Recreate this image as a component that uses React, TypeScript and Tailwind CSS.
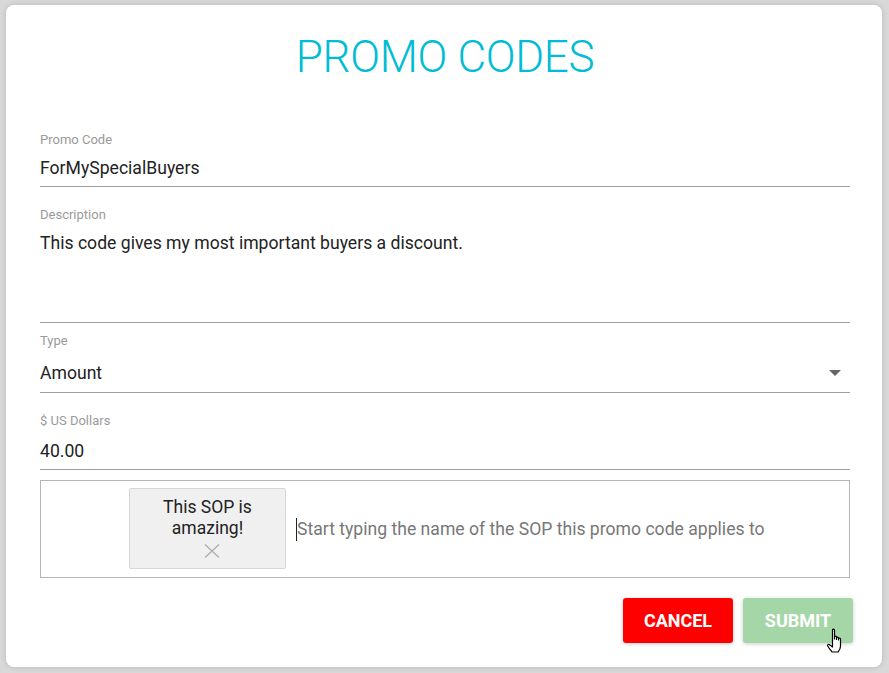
import React from "react";

export default function App() {
  return (
    <div
      className="w-[889px] h-[673px] bg-[#d9d9d9] pt-[5px] pl-[6px]"
      style={{ fontFamily: "Roboto, 'Liberation Sans', sans-serif" }}
    >
      <div className="relative w-[876px] h-[662px] bg-white rounded-[8px] shadow-[0_0_6px_rgba(0,0,0,0.15)] pt-[26px] pl-[34px] pr-[32px]">
        <h1 className="text-center text-[44px] leading-[52px] font-light text-[#00bcd4] tracking-[-0.3px]">
          PROMO CODES
        </h1>

        {/* Promo Code */}
        <div className="mt-[49px] border-b border-[#9e9e9e] pb-[6px]">
          <div className="text-[13px] leading-[16px] text-[#9a9a9a]">Promo Code</div>
          <div className="mt-[8px] text-[17.6px] leading-[24px] text-[#222]">ForMySpecialBuyers</div>
        </div>

        {/* Description */}
        <div className="mt-[20px] border-b border-[#9e9e9e] pb-[67px]">
          <div className="text-[13px] leading-[16px] text-[#9a9a9a]">Description</div>
          <div className="mt-[8px] text-[17.6px] leading-[24px] text-[#222]">
            This code gives my most important buyers a discount.
          </div>
        </div>

        {/* Type */}
        <div className="mt-[10px] border-b border-[#9e9e9e] pb-[7px]">
          <div className="text-[13px] leading-[16px] text-[#9a9a9a]">Type</div>
          <div className="mt-[12px] flex items-center justify-between text-[17.6px] leading-[24px] text-[#222]">
            <span>Amount</span>
            <svg width="12" height="6" viewBox="0 0 12 6" className="mr-[9px]">
              <path d="M0 0 L12 0 L6 6 Z" fill="#666" />
            </svg>
          </div>
        </div>

        {/* US Dollars */}
        <div className="mt-[20px] border-b border-[#9e9e9e] pb-[6px]">
          <div className="text-[13px] leading-[16px] text-[#9a9a9a]">$ US Dollars</div>
          <div className="mt-[10px] text-[17.6px] leading-[24px] text-[#222]">40.00</div>
        </div>

        {/* SOP selector */}
        <div className="mt-[10px] h-[98px] border border-[#b5b5b5] flex items-start pt-[7px] pl-[88px]">
          <div className="w-[157px] h-[81px] bg-[#f0f0f0] border border-[#d6d6d6] rounded-[2px] flex flex-col items-center pt-[8px]">
            <div className="text-center text-[17.5px] leading-[21px] text-[#222]">
              This SOP is
              <br />
              amazing!
            </div>
            <svg width="16" height="14" viewBox="0 0 16 14" className="mt-[5px] ml-[8px]">
              <path d="M1 0.5 L15 13.5 M15 0.5 L1 13.5" stroke="#aaa" strokeWidth="1.2" fill="none" />
            </svg>
          </div>
          <div className="ml-[10px] mt-[29px] flex items-center h-[24px]">
            <span className="w-[1px] h-[23px] bg-[#222]" />
            <span className="text-[17.6px] leading-[24px] text-[#777]">
              Start typing the name of the SOP this promo code applies to
            </span>
          </div>
        </div>

        {/* Buttons */}
        <div className="mt-[20px] flex justify-end gap-[10px] mr-[-3px]">
          <button className="w-[110px] h-[45px] rounded-[3px] bg-[#ff0000] text-white text-[18px] font-bold shadow-[0_1px_4px_rgba(0,0,0,0.2)]">
            CANCEL
          </button>
          <button className="w-[110px] h-[45px] rounded-[3px] bg-[#a5d6a7] text-white text-[18px] font-bold shadow-[0_1px_4px_rgba(0,0,0,0.2)]">
            SUBMIT
          </button>
        </div>

        {/* hand cursor overlay */}
        <svg
          width="20"
          height="28"
          viewBox="0 0 20 28"
          className="absolute left-[820px] top-[623px]"
        >
          <path
            d="M6.5 2 C6.5 0.8 8.5 0.8 8.5 2 L8.5 11 L8.5 9 C8.5 7.8 10.5 7.8 10.5 9 L10.5 11.5 L10.5 10 C10.5 8.8 12.5 8.8 12.5 10 L12.5 12 L12.5 11 C12.5 9.8 14.5 9.8 14.5 11 L14.5 18 C14.5 21 13 23 12 24 L6 24 C5 22.5 3.5 21 2 18.5 C1 17 2 15.8 3.3 16.6 L6.5 19 Z"
            fill="white"
            stroke="black"
            strokeWidth="1.2"
            strokeLinejoin="round"
          />
        </svg>
      </div>
    </div>
  );
}
